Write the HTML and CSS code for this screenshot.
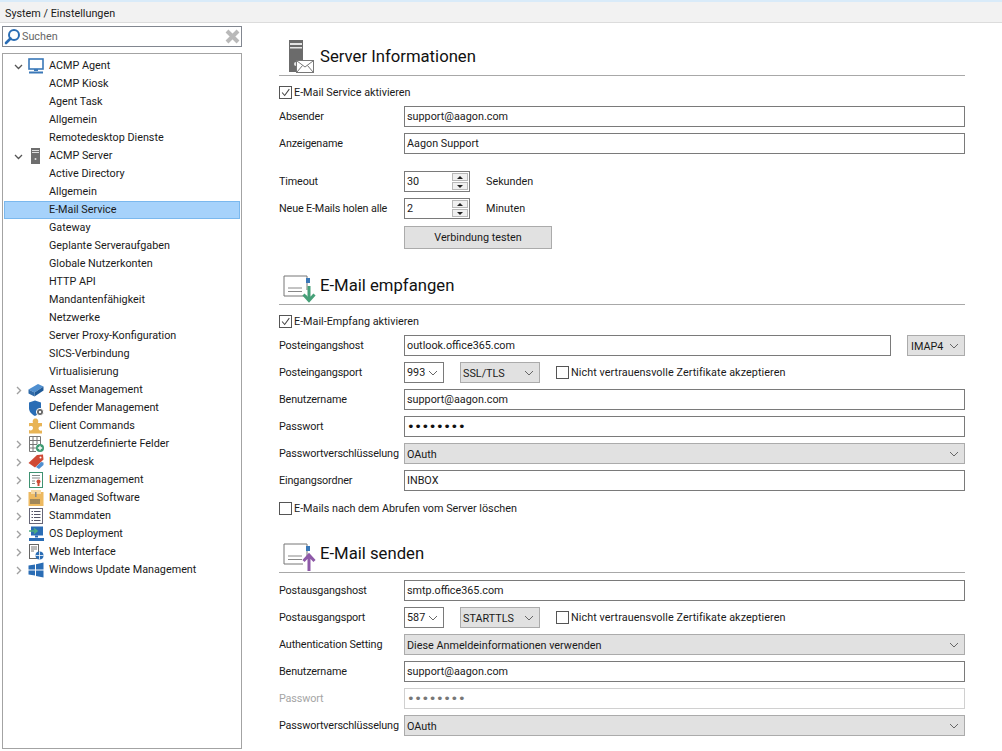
FILE: index.html
```html
<!DOCTYPE html>
<html lang="de">
<head>
<meta charset="utf-8">
<title>System / Einstellungen</title>
<link rel="stylesheet" href="styles.css">
</head>
<body>
<div class="app">
  <header class="crumb">System / Einstellungen</header>
  <div class="body">
    <aside class="side">
      <div class="search">
        <svg class="s-ico" width="17" height="17" viewBox="0 0 17 17"><circle cx="10" cy="7" r="5" fill="none" stroke="#2a6db5" stroke-width="2"/><path d="M6.5 10.5L2 15" stroke="#2a6db5" stroke-width="2.6" stroke-linecap="round"/></svg>
        <span class="s-txt">Suchen</span>
        <svg class="s-x" width="15" height="15" viewBox="0 0 15 15"><path d="M2 2L13 13M13 2L2 13" stroke="#b9b9b9" stroke-width="4"/></svg>
      </div>
      <nav class="tree">
        <div class="row"><svg class="car" viewBox="0 0 9 9"><path d="M1 3L4.5 6.5L8 3" fill="none" stroke="#555" stroke-width="1.3"/></svg>
          <svg class="ic" viewBox="0 0 16 16"><rect x="1" y="1" width="14" height="10" fill="#fff" stroke="#3a78b8" stroke-width="1.6"/><rect x="6" y="11" width="4" height="2" fill="#3a78b8"/><rect x="1" y="13.5" width="14" height="2" fill="#3a78b8"/></svg>
          <span>ACMP Agent</span></div>
        <div class="row"><span class="t">ACMP Kiosk</span></div>
        <div class="row"><span class="t">Agent Task</span></div>
        <div class="row"><span class="t">Allgemein</span></div>
        <div class="row"><span class="t">Remotedesktop Dienste</span></div>
        <div class="row"><svg class="car" viewBox="0 0 9 9"><path d="M1 3L4.5 6.5L8 3" fill="none" stroke="#555" stroke-width="1.3"/></svg>
          <svg class="ic" viewBox="0 0 16 16"><rect x="3" y="0" width="9" height="16" fill="#6e6e6e"/><rect x="4" y="2" width="7" height="1" fill="#ddd"/><rect x="4" y="4" width="7" height="1" fill="#ddd"/><circle cx="7.5" cy="11" r="1" fill="#ddd"/></svg>
          <span>ACMP Server</span></div>
        <div class="row"><span class="t">Active Directory</span></div>
        <div class="row"><span class="t">Allgemein</span></div>
        <div class="row sel"><span class="t">E-Mail Service</span></div>
        <div class="row"><span class="t">Gateway</span></div>
        <div class="row"><span class="t">Geplante Serveraufgaben</span></div>
        <div class="row"><span class="t">Globale Nutzerkonten</span></div>
        <div class="row"><span class="t">HTTP API</span></div>
        <div class="row"><span class="t">Mandantenfähigkeit</span></div>
        <div class="row"><span class="t">Netzwerke</span></div>
        <div class="row"><span class="t">Server Proxy-Konfiguration</span></div>
        <div class="row"><span class="t">SICS-Verbindung</span></div>
        <div class="row"><span class="t">Virtualisierung</span></div>
        <div class="row"><svg class="car" viewBox="0 0 9 9"><path d="M3 1L6.500 4.500L3 8" fill="none" stroke="#a0a0a0" stroke-width="1.400"/></svg>
          <svg class="ic" viewBox="0 0 16 16"><path d="M0.500 7.500L10 2L15.500 4.500L6.500 10.500Z" fill="#4f8fd0"/><path d="M0.500 7.500L6.500 10.500V14.500L0.500 11.500Z" fill="#2f6aa8"/><path d="M6.500 10.500L15.500 4.500V8.500L6.500 14.500Z" fill="#1f5a98"/></svg>
          <span>Asset Management</span></div>
        <div class="row"><span class="car"></span>
          <svg class="ic" viewBox="0 0 16 16"><path d="M1 2.500L7 0.500L13 2.500V8C13 12 9 15 7 16C4 14.500 1 12 1 8Z" fill="#2a6db5"/><circle cx="12" cy="12" r="3.600" fill="#666" stroke="#fff" stroke-width="1"/><circle cx="12" cy="12" r="1.200" fill="#fff"/></svg>
          <span>Defender Management</span></div>
        <div class="row"><span class="car"></span>
          <svg class="ic" viewBox="0 0 16 16"><path d="M1 5H5C4 2.500 5.500 0.500 7.500 0.500S11 2.500 10 5H14V8.500C12 7.500 10.500 9 10.500 10.500S12 13 14 12.500V15.500H1V12C3 13 5 12 5 10S3 7.500 1 8.500Z" fill="#e8b455"/></svg>
          <span>Client Commands</span></div>
        <div class="row"><svg class="car" viewBox="0 0 9 9"><path d="M3 1L6.500 4.500L3 8" fill="none" stroke="#a0a0a0" stroke-width="1.400"/></svg>
          <svg class="ic" viewBox="0 0 16 16"><path d="M1.500 0.500H12.500V9M1.500 0.500V15.500H8M1.500 4.500H12.500M1.500 8.500H9M1.500 12H8M5 0.500V15.500M9 0.500V8" fill="none" stroke="#777" stroke-width="1"/><circle cx="12" cy="12" r="4" fill="#3c9a70"/><path d="M12 9.800V14.200M9.800 12H14.200" stroke="#fff" stroke-width="1.300"/></svg>
          <span>Benutzerdefinierte Felder</span></div>
        <div class="row"><svg class="car" viewBox="0 0 9 9"><path d="M3 1L6.500 4.500L3 8" fill="none" stroke="#a0a0a0" stroke-width="1.400"/></svg>
          <svg class="ic" viewBox="0 0 16 16"><path d="M0.500 9L9 1L15 0.500L15.500 5.500L7 13.500Z" fill="#cf4a35"/><circle cx="12.500" cy="3.500" r="1" fill="#fff"/><path d="M8 13L13 8L15.500 8.500V11L11 15Z" fill="#4f8fd0"/></svg>
          <span>Helpdesk</span></div>
        <div class="row"><svg class="car" viewBox="0 0 9 9"><path d="M3 1L6.500 4.500L3 8" fill="none" stroke="#a0a0a0" stroke-width="1.400"/></svg>
          <svg class="ic" viewBox="0 0 16 16"><rect x="1.500" y="0.500" width="13" height="15" fill="#fff" stroke="#3f9272"/><path d="M4 3.500H12M4 6H12M4 9H7M4 11.500H7" stroke="#888"/><circle cx="10.500" cy="9.500" r="2" fill="#cf4a35"/><rect x="9.500" y="11" width="2" height="3" fill="#cf4a35"/></svg>
          <span>Lizenzmanagement</span></div>
        <div class="row"><svg class="car" viewBox="0 0 9 9"><path d="M3 1L6.500 4.500L3 8" fill="none" stroke="#a0a0a0" stroke-width="1.400"/></svg>
          <svg class="ic" viewBox="0 0 16 16"><rect x="0.500" y="2" width="15" height="14" fill="#edb960"/><rect x="3" y="0" width="10" height="4" fill="#f6d9a4"/><rect x="7" y="2" width="1.500" height="5" fill="#888"/><path d="M3 9V14M5 9V14M7 9V14M9 9V14M11 9V14" stroke="#555"/></svg>
          <span>Managed Software</span></div>
        <div class="row"><svg class="car" viewBox="0 0 9 9"><path d="M3 1L6.500 4.500L3 8" fill="none" stroke="#a0a0a0" stroke-width="1.400"/></svg>
          <svg class="ic" viewBox="0 0 16 16"><rect x="1.500" y="0.500" width="13" height="15" fill="#fff" stroke="#667"/><path d="M6 3.500H12.500M6 6.500H12.500M6 9.500H12.500M6 12.500H12.500M3.500 3.500H5M3.500 6.500H5M3.500 9.500H5M3.500 12.500H5" stroke="#556"/></svg>
          <span>Stammdaten</span></div>
        <div class="row"><svg class="car" viewBox="0 0 9 9"><path d="M3 1L6.500 4.500L3 8" fill="none" stroke="#a0a0a0" stroke-width="1.400"/></svg>
          <svg class="ic" viewBox="0 0 16 16"><rect x="3" y="0.500" width="12" height="9" fill="#2a6db5"/><path d="M1 5H8M6 2.500L9 5L6 7.500" fill="none" stroke="#4caf80" stroke-width="1.600"/><rect x="7" y="9.500" width="3" height="2" fill="#2a6db5"/><rect x="1" y="12" width="15" height="3" fill="#2a6db5"/></svg>
          <span>OS Deployment</span></div>
        <div class="row"><svg class="car" viewBox="0 0 9 9"><path d="M3 1L6.500 4.500L3 8" fill="none" stroke="#a0a0a0" stroke-width="1.400"/></svg>
          <svg class="ic" viewBox="0 0 16 16"><rect x="1.500" y="0.500" width="9" height="14" fill="#fff" stroke="#666"/><path d="M3 3H9M3 5H9M3 7H6" stroke="#777"/><circle cx="11.500" cy="11.500" r="4" fill="#2a6db5"/><path d="M7.500 11.500H15.500M11.500 7.500V15.500" stroke="#fff" stroke-width="0.800"/></svg>
          <span>Web Interface</span></div>
        <div class="row"><svg class="car" viewBox="0 0 9 9"><path d="M3 1L6.500 4.500L3 8" fill="none" stroke="#a0a0a0" stroke-width="1.400"/></svg>
          <svg class="ic" viewBox="0 0 16 16"><path d="M0.500 3.500L7 2.500V7.500H0.500ZM8 2.300L15.500 0.500V7.500H8ZM0.500 8.500H7V13.500L0.500 12.500ZM8 8.500H15.500V15.500L8 14Z" fill="#2a6db5"/></svg>
          <span>Windows Update Management</span></div>
      </nav>
    </aside>

    <main class="main">
      <section class="sec sec-first">
        <div class="head">
          <svg class="h-ico" width="28" height="34" viewBox="0 0 28 34"><rect x="2" y="0" width="14" height="32" fill="#6b6b6b"/><rect x="3" y="3" width="12" height="2" fill="#e4e4e4"/><rect x="3" y="7" width="12" height="1.500" fill="#e4e4e4"/><circle cx="9" cy="24" r="2" fill="#e4e4e4"/><rect x="9.500" y="20.500" width="17" height="12" fill="#fff" stroke="#777"/><path d="M10 21L18 27L26 21M10 32L15.500 25.500M26 32L20.500 25.500" fill="none" stroke="#777"/></svg>
          <h2>Server Informationen</h2>
        </div>
        <label class="chk"><span class="box on"><svg viewBox="0 0 13 13"><path d="M2.500 6.500L5.500 10L11 2.500" fill="none" stroke="#444" stroke-width="1.200"/></svg></span>E-Mail Service aktivieren</label>
        <div class="form">
          <span class="lab">Absender</span><div class="inp">support@aagon.com</div>
          <span class="lab">Anzeigename</span><div class="inp">Aagon Support</div>
          <span class="lab lab-gap">Timeout</span>
          <div class="line lab-gap"><div class="spin"><span>30</span><i class="btns"><b class="up"></b><b class="dn"></b></i></div><span class="unit">Sekunden</span></div>
          <span class="lab">Neue E-Mails holen alle</span>
          <div class="line"><div class="spin"><span>2</span><i class="btns"><b class="up"></b><b class="dn"></b></i></div><span class="unit">Minuten</span></div>
          <span></span><div class="btn">Verbindung testen</div>
        </div>
      </section>

      <section class="sec sec-recv">
        <div class="head">
          <svg class="h-ico" width="36" height="28" viewBox="0 0 36 28"><path d="M24 15V1H1V21H24" fill="#fff" stroke="#777" stroke-width="1"/><rect x="23" y="3" width="4" height="5" fill="#3a78b8"/><path d="M5 13H19M5 16.500H19" stroke="#888"/><path d="M26 11V24M20.500 19.500L26 25.500L31.500 19.500" fill="none" stroke="#46a078" stroke-width="3"/></svg>
          <h2>E-Mail empfangen</h2>
        </div>
        <label class="chk"><span class="box on"><svg viewBox="0 0 13 13"><path d="M2.500 6.500L5.500 10L11 2.500" fill="none" stroke="#444" stroke-width="1.200"/></svg></span>E-Mail-Empfang aktivieren</label>
        <div class="form">
          <span class="lab">Posteingangshost</span>
          <div class="line"><div class="inp grow">outlook.office365.com</div><div class="sel-box imap">IMAP4<svg class="chev" viewBox="0 0 10 6"><path d="M1 1L5 5L9 1" fill="none" stroke="#666"/></svg></div></div>
          <span class="lab">Posteingangsport</span>
          <div class="line"><div class="port">993<svg class="chev" viewBox="0 0 10 6"><path d="M1 1L5 5L9 1" fill="none" stroke="#666"/></svg></div><div class="sel-box enc">SSL/TLS<svg class="chev" viewBox="0 0 10 6"><path d="M1 1L5 5L9 1" fill="none" stroke="#666"/></svg></div><label class="chk chk-in"><span class="box"></span>Nicht vertrauensvolle Zertifikate akzeptieren</label></div>
          <span class="lab">Benutzername</span><div class="inp">support@aagon.com</div>
          <span class="lab">Passwort</span><div class="inp dots">••••••••</div>
          <span class="lab">Passwortverschlüsselung</span><div class="sel-box">OAuth<svg class="chev" viewBox="0 0 10 6"><path d="M1 1L5 5L9 1" fill="none" stroke="#666"/></svg></div>
          <span class="lab">Eingangsordner</span><div class="inp">INBOX</div>
        </div>
        <label class="chk chk-del"><span class="box"></span>E-Mails nach dem Abrufen vom Server löschen</label>
      </section>

      <section class="sec sec-send">
        <div class="head">
          <svg class="h-ico" width="36" height="28" viewBox="0 0 36 28"><path d="M24 15V1H1V21H20" fill="#fff" stroke="#777" stroke-width="1"/><rect x="23" y="3" width="4" height="5" fill="#3a78b8"/><path d="M5 13H19M5 16.500H19" stroke="#888"/><path d="M26 28V13M20.500 18L26 12L31.500 18" fill="none" stroke="#8e5aa8" stroke-width="3"/></svg>
          <h2>E-Mail senden</h2>
        </div>
        <div class="form">
          <span class="lab">Postausgangshost</span><div class="inp">smtp.office365.com</div>
          <span class="lab">Postausgangsport</span>
          <div class="line"><div class="port">587<svg class="chev" viewBox="0 0 10 6"><path d="M1 1L5 5L9 1" fill="none" stroke="#666"/></svg></div><div class="sel-box enc">STARTTLS<svg class="chev" viewBox="0 0 10 6"><path d="M1 1L5 5L9 1" fill="none" stroke="#666"/></svg></div><label class="chk chk-in"><span class="box"></span>Nicht vertrauensvolle Zertifikate akzeptieren</label></div>
          <span class="lab">Authentication Setting</span><div class="sel-box">Diese Anmeldeinformationen verwenden<svg class="chev" viewBox="0 0 10 6"><path d="M1 1L5 5L9 1" fill="none" stroke="#666"/></svg></div>
          <span class="lab">Benutzername</span><div class="inp">support@aagon.com</div>
          <span class="lab off">Passwort</span><div class="inp dots dis">••••••••</div>
          <span class="lab">Passwortverschlüsselung</span><div class="sel-box">OAuth<svg class="chev" viewBox="0 0 10 6"><path d="M1 1L5 5L9 1" fill="none" stroke="#666"/></svg></div>
        </div>
      </section>
    </main>
  </div>
</div>
</body>
</html>
```
FILE: styles.css
```css
* { box-sizing: border-box; }
html, body { margin: 0; padding: 0; height: 100%; }
body { background: #fff; font-family: "Roboto", "Open Sans", sans-serif; font-size: 10.8px; color: #1a1a1a; overflow: hidden; }
.app { width: 1002px; height: 751px; display: flex; flex-direction: column; }
.crumb { height: 23px; padding: 4px 0 0 5px; line-height: 15px; background: #f2f2f2; border-top: 2px solid #d9ebf9; border-bottom: 1px solid #dcdcdc; }
.body { flex: 1; display: flex; min-height: 0; }
.side { width: 243px; padding: 3px 0 0 2px; display: flex; flex-direction: column; flex: none; }
.search { width: 240px; height: 21px; border: 1px solid #828790; display: flex; align-items: center; padding: 0 1px; }
.s-ico { flex: none; }
.s-txt { flex: 1; color: #666; padding-left: 1px; }
.s-x { flex: none; }
.tree { margin-top: 6px; width: 240px; height: 696px; border: 1px solid #a3a3a3; padding: 3px 1px; }
.row { height: 18px; display: flex; align-items: center; padding-left: 9px; line-height: 18px; border: 1px solid transparent; white-space: nowrap; }
.row.sel { background: #a6d2fb; border-color: #7ab8ee; }
.car { width: 9px; height: 9px; flex: none; }
.ic { width: 16px; height: 16px; flex: none; margin-left: 5px; margin-right: 5px; }
.t { padding-left: 35px; }
.main { flex: 1; padding: 0 37px 0 36px; min-width: 0; }
.head { display: flex; align-items: flex-end; border-bottom: 1px solid #a8a8a8; height: 53px; }
.h-ico { flex: none; margin-bottom: 1px; margin-right: 1px; }
.head h2 { margin: 0; font-weight: 400; font-size: 16.7px; line-height: 22px; color: #111; padding-bottom: 7px; }
.sec-first .h-ico { margin-left: 8px; margin-right: 5px; }
.sec-recv .h-ico, .sec-send .h-ico { margin-left: 4px; }
.sec-recv { margin-top: 3px; }
.sec-send { margin-top: 4px; }
.chk { display: flex; align-items: center; height: 15px; margin-top: 9px; gap: 2px; }
.box { width: 13px; height: 13px; border: 1px solid #555; background: #fff; flex: none; display: block; }
.box svg { display: block; width: 11px; height: 11px; }
.form { display: grid; grid-template-columns: 125px 1fr; row-gap: 6px; align-items: center; margin-top: 6px; }
.sec-send .form { margin-top: 7px; }
.chk-del { margin-top: 10px; }
.chk-in { margin: 0 0 0 16px; letter-spacing: 0.07px; }
.lab { line-height: 21px; white-space: nowrap; letter-spacing: -0.15px; }
.lab-gap { margin-top: 11px; }
.off { color: #a5a5a5; }
.inp { height: 21px; border: 1px solid #7a7a7a; padding-left: 2px; line-height: 19px; background: #fff; }
.inp.dots { font-family: "DejaVu Sans", sans-serif; font-size: 13px; letter-spacing: -0.4px; color: #111; }
.inp.dis { border-color: #d0d0d0; color: #777; }
.grow { flex: 1; }
.line { display: flex; align-items: center; }
.spin { width: 66px; height: 21px; border: 1px solid #7a7a7a; padding-left: 2px; line-height: 19px; display: flex; justify-content: space-between; background: #fff; }
.btns { width: 16px; margin: 0 1px; display: flex; flex-direction: column; gap: 1px; padding: 1px 0; }
.btns b { flex: 1; background: #f0f0f0; border: 1px solid #b8b8b8; position: relative; }
.btns b::after { content: ""; position: absolute; left: 4px; border-left: 3px solid transparent; border-right: 3px solid transparent; }
.up::after { top: 2px; border-bottom: 3px solid #222; }
.dn::after { top: 2px; border-top: 3px solid #222; }
.unit { margin-left: 16px; }
.btn { width: 148px; height: 23px; border: 1px solid #ababab; background: #e1e1e1; text-align: center; line-height: 21px; margin-top: 1px; }
.sel-box, .port { height: 21px; display: flex; align-items: center; justify-content: space-between; padding: 1px 4px 0 2px; line-height: 19px; }
.sel-box { border: 1px solid #ababab; background: #e1e1e1; }
.port { width: 40px; border: 1px solid #7a7a7a; background: #fff; padding-top: 0; }
.imap { width: 58px; margin-left: 16px; flex: none; padding-left: 3px; }
.enc { width: 80px; margin-left: 16px; flex: none; }
.chev { width: 10px; height: 6px; flex: none; margin-right: 1px; }
```
